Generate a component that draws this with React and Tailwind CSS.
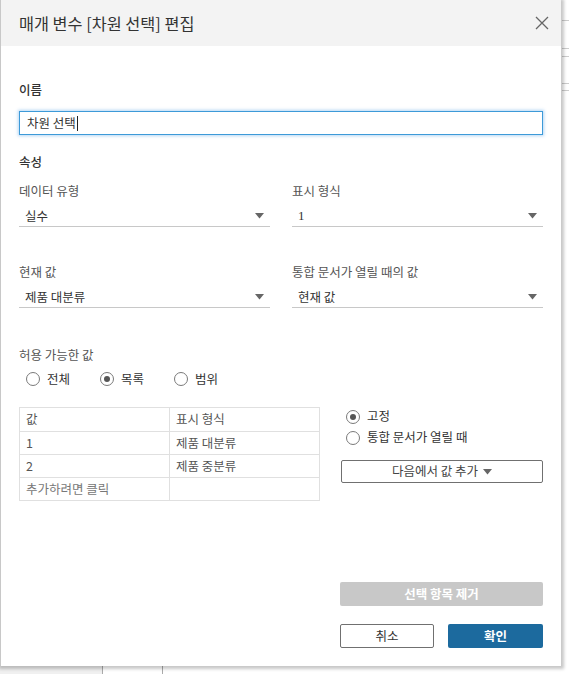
import React from 'react';

const font = { fontFamily: '"Noto Sans CJK KR", "Noto Sans", sans-serif' };

const Caret = () => (
  <svg width="9" height="6" viewBox="0 0 9 6" className="shrink-0">
    <path d="M0 0 L9 0 L4.5 5.5 Z" fill="#666" />
  </svg>
);

const Radio = ({ checked }) => (
  <span className="w-[14px] h-[14px] rounded-full border border-[#7a7a7a] bg-white flex items-center justify-center shrink-0">
    {checked && <span className="w-[6px] h-[6px] rounded-full bg-[#555]" />}
  </span>
);

const Select = ({ value, mono }) => (
  <div className="h-[21px] border-b border-[#c8c8c8] flex items-center justify-between pl-[6px] pr-[6px]">
    <span className={mono ? 'text-[13px] text-[#333] font-[Liberation_Serif]' : 'text-[12.5px] text-[#333]'}>{value}</span>
    <Caret />
  </div>
);

const Field = ({ label, value, mono }) => (
  <div className="flex flex-col">
    <div className="h-[18px] leading-[18px] text-[12.5px] text-[#555]">{label}</div>
    <div className="mt-[6px]">
      <Select value={value} mono={mono} />
    </div>
  </div>
);

const rows = [
  ['값', '표시 형식'],
  ['1', '제품 대분류'],
  ['2', '제품 중분류'],
  ['추가하려면 클릭', ''],
];

export default function App() {
  return (
    <div className="w-[569px] h-[674px] relative bg-white overflow-hidden" style={font}>
      {/* underlying app */}
      <div className="absolute left-0 top-[666px] w-[102px] h-[8px] bg-[#f0f0f0]" />
      <div className="absolute left-[102px] top-[666px] w-px h-[8px] bg-[#aaa]" />
      <div className="absolute left-[162px] top-[666px] w-px h-[8px] bg-[#aaa]" />
      <div className="absolute left-[562px] top-[20px] w-[7px] h-px bg-[#ccc]" />
      <div className="absolute left-[562px] top-[48px] w-[7px] h-px bg-[#ccc]" />
      <div className="absolute left-[562px] top-[56px] w-[7px] h-px bg-[#ccc]" />
      <div className="absolute left-[562px] top-[83px] w-[7px] h-px bg-[#ccc]" />
      <div className="absolute left-[562px] top-[90px] w-[7px] h-px bg-[#ccc]" />

      {/* dialog */}
      <div className="absolute left-0 top-0 w-[561px] h-[666px] bg-white border-l border-[#c8c8c8] shadow-[1px_1px_3px_2px_rgba(0,0,0,0.22)] flex flex-col">
        <div className="h-[46px] bg-[#f3f3f3] flex items-center justify-between pl-[18px] pr-[12px] shrink-0">
          <span className="text-[16.3px] text-[#333]">매개 변수 [차원 선택] 편집</span>
          <svg width="14" height="14" viewBox="0 0 14 14">
            <path d="M1 1 L13 13 M13 1 L1 13" stroke="#666" strokeWidth="1.3" />
          </svg>
        </div>

        <div className="flex flex-col pl-[18px] pr-[18px] flex-1">
          <div className="mt-[35px] h-[18px] leading-[18px] text-[12.5px] text-[#333] font-medium">이름</div>
          <div className="mt-[12px] h-[24px] border border-[#3d9ad8] shadow-[0_0_3px_1px_rgba(90,165,230,0.45)] flex items-center pl-[7px]">
            <span className="text-[12.5px] text-[#333]">차원 선택</span>
            <span className="w-px h-[15px] bg-[#222] ml-[1px]" />
          </div>

          <div className="mt-[18px] h-[18px] leading-[18px] text-[12.5px] text-[#333] font-medium">속성</div>
          <div className="mt-[11px] grid grid-cols-2 gap-x-[22px]">
            <Field label="데이터 유형" value="실수" />
            <Field label="표시 형식" value="1" mono />
          </div>
          <div className="mt-[36px] grid grid-cols-2 gap-x-[22px]">
            <Field label="현재 값" value="제품 대분류" />
            <Field label="통합 문서가 열릴 때의 값" value="현재 값" />
          </div>

          <div className="mt-[38px] h-[18px] leading-[18px] text-[12.5px] text-[#555]">허용 가능한 값</div>
          <div className="mt-[6px] h-[18px] flex items-center pl-[7px]">
            {[['전체', false], ['목록', true], ['범위', false]].map(([t, c]) => (
              <div key={t} className="w-[74px] flex items-center gap-[7px]">
                <Radio checked={c} />
                <span className="text-[12.5px] text-[#333]">{t}</span>
              </div>
            ))}
          </div>

          <div className="mt-[19px] flex gap-[21px]">
            <div className="w-[301px] border border-[#e0e0e0] flex flex-col">
              {rows.map(([a, b], i) => (
                <div key={i} className={'flex h-[23px] ' + (i > 0 ? 'border-t border-[#e0e0e0]' : '')}>
                  <div className={'w-[150px] border-r border-[#e0e0e0] flex items-center pl-[6px] text-[12.5px] ' + (i === 3 ? 'text-[#777]' : 'text-[#555]')}>{a}</div>
                  <div className="flex-1 flex items-center pl-[6px] text-[12.5px] text-[#555]">{b}</div>
                </div>
              ))}
            </div>
            <div className="flex-1 flex flex-col">
              <div className="-mt-[1px] h-[21px] flex items-center gap-[7px] pl-[5px]">
                <Radio checked />
                <span className="text-[12.5px] text-[#333]">고정</span>
              </div>
              <div className="h-[21px] flex items-center gap-[7px] pl-[5px]">
                <Radio />
                <span className="text-[12.5px] text-[#333]">통합 문서가 열릴 때</span>
              </div>
              <button className="mt-[12px] h-[23px] border border-[#707070] rounded-[2px] bg-white flex items-center justify-center gap-[5px] text-[12.5px] text-[#444]">
                다음에서 값 추가
                <Caret />
              </button>
            </div>
          </div>

          <div className="mt-auto flex flex-col items-end pb-[18px]">
            <button className="w-[203px] h-[24px] rounded-[2px] bg-[#c8c8c8] text-white text-[12.5px] font-bold">선택 항목 제거</button>
            <div className="mt-[18px] flex gap-[14px]">
              <button className="w-[94px] h-[24px] border border-[#707070] rounded-[2px] bg-white text-[12.5px] text-[#333]">취소</button>
              <button className="w-[95px] h-[24px] rounded-[2px] bg-[#1c6a9e] text-white text-[12.5px] font-bold">확인</button>
            </div>
          </div>
        </div>
      </div>
    </div>
  );
}
